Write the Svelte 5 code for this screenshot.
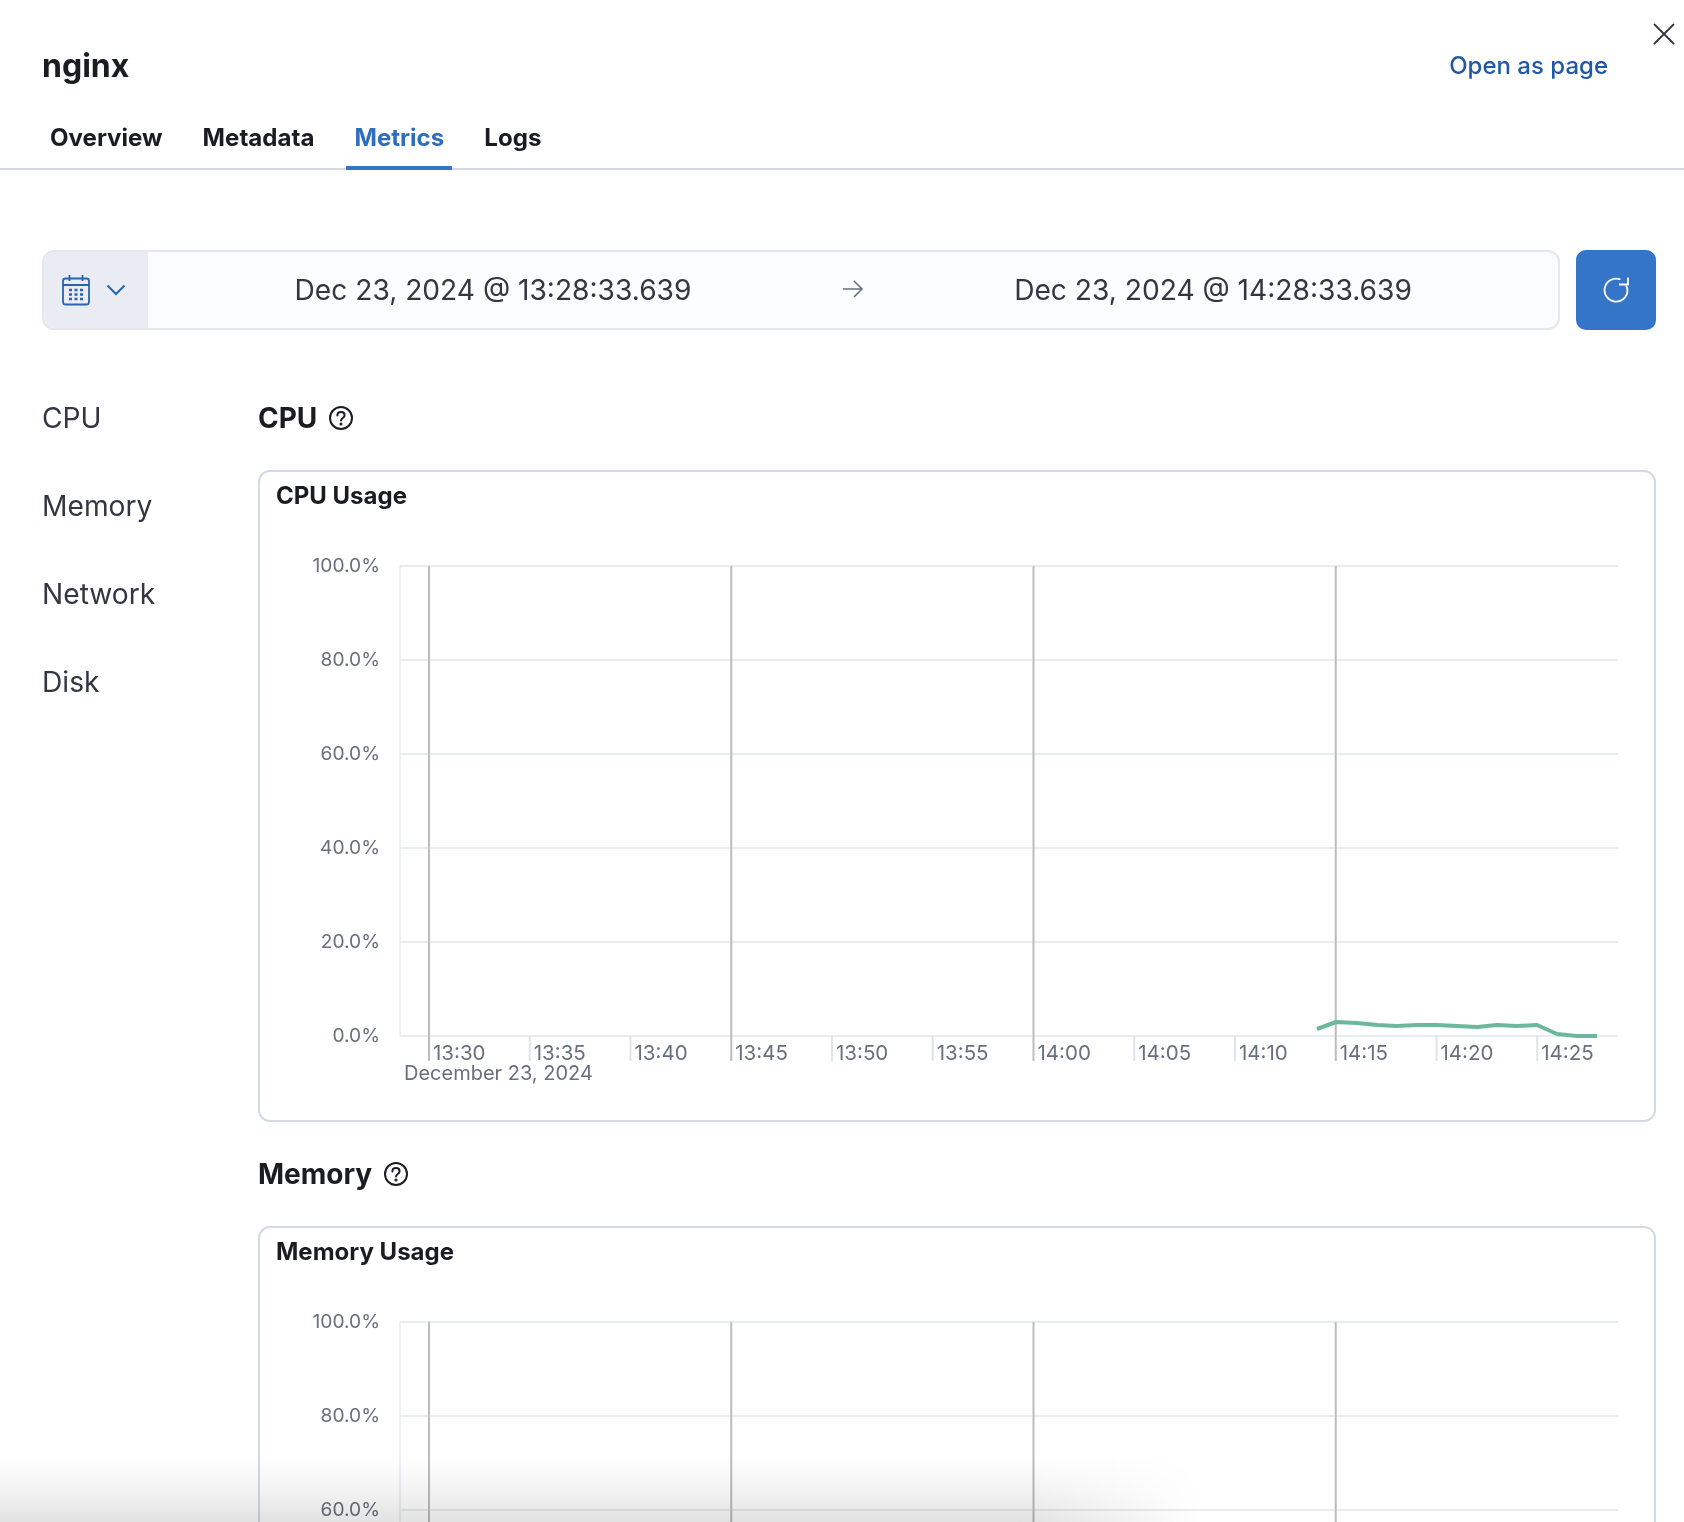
<script>
  const tabs = ["Overview", "Metadata", "Metrics", "Logs"];
  const nav = ["CPU", "Memory", "Network", "Disk"];

  // chart geometry, in svg coordinates (svg starts 260px in, 41px below panel top)
  const left = 140, right = 1358, top = 55, step = 94;
  const yLabels = ["100.0%", "80.0%", "60.0%", "40.0%", "20.0%", "0.0%"];
  const bottom = top + step * 5;
  const ticks = ["13:30", "13:35", "13:40", "13:45", "13:50", "13:55", "14:00", "14:05", "14:10", "14:15", "14:20", "14:25"];
  const tickX = (i) => 169 + i * 100.75;

  const cpuLine = "1057,518 1076,511 1097,512 1117,514 1137,515 1157,514 1177,514 1197,515 1217,516 1237,514 1257,515 1277,514 1297,523 1317,525 1337,525";
</script>

{#snippet helpIcon()}
  <svg class="help" width="24" height="24" viewBox="0 0 24 24" fill="none" stroke="#1a1c21" stroke-width="2">
    <circle cx="12" cy="12" r="11" />
    <path d="M8.400 9.400c0-2.100 1.600-3.400 3.600-3.400s3.600 1.300 3.600 3.200c0 2.900-3.600 2.700-3.600 5.400" stroke-linecap="round" />
    <circle cx="12" cy="18" r="0.6" fill="#1a1c21" />
  </svg>
{/snippet}

{#snippet chart(line)}
  <svg class="chart" width="1394" height="609" viewBox="0 0 1394 609">
    {#each yLabels as label, i}
      <line x1={left} x2={right} y1={top + i * step} y2={top + i * step} stroke="#e9ecf1" stroke-width="2" />
      <text x="120" y={top + i * step + 6} text-anchor="end" class="tick y">{label}</text>
    {/each}
    <line x1={left} x2={left} y1={top} y2={bottom} stroke="#e9ecf1" stroke-width="1.5" />
    {#each ticks as t, i}
      <line x1={tickX(i)} x2={tickX(i)} y1={bottom} y2={bottom + 25} stroke={i % 3 === 0 ? "#bdbdbd" : "#dfe2e7"} stroke-width="2" />
      {#if i % 3 === 0}
        <line x1={tickX(i)} x2={tickX(i)} y1={top} y2={bottom} stroke="#bdbdbd" stroke-width="2" />
      {/if}
      <text x={tickX(i) + 4} y={bottom + 24} class="tick">{t}</text>
    {/each}
    <text x="144" y={bottom + 44} class="tick date-label">December 23, 2024</text>
    {#if line}
      <polyline points={line} fill="none" stroke="#6db79c" stroke-width="4" stroke-linejoin="round" />
    {/if}
  </svg>
{/snippet}

<div class="flyout">
  <button class="close" aria-label="Close">
    <svg width="22" height="22" viewBox="0 0 22 22" fill="none" stroke="#343741" stroke-width="1.8"><path d="M1 1l20 20M21 1L1 21" /></svg>
  </button>

  <header>
    <div class="title-row">
      <h1>nginx</h1>
      <span class="link">Open as page</span>
    </div>
    <div class="tabs">
      {#each tabs as tab}
        <div class="tab" class:active={tab === "Metrics"}>{tab}</div>
      {/each}
    </div>
  </header>

  <div class="date-row">
    <div class="date-bar">
      <div class="prepend">
        <svg width="30" height="32" viewBox="0 0 30 32" fill="none" stroke="#2b64ad" stroke-width="1.8">
          <rect x="2" y="4.500" width="26" height="26" rx="2.500" />
          <path d="M2 11h26M8.500 1v6M21.500 1v6" />
          <path d="M8 16h3M13.500 16h3M19 16h3M8 20.500h3M13.500 20.500h3M19 20.500h3M8 25h3M13.500 25h3M19 25h3" stroke-width="2.400" />
        </svg>
        <svg width="20" height="12" viewBox="0 0 20 12" fill="none" stroke="#2b64ad" stroke-width="2"><path d="M1.500 1.500L10 10l8.500-8.500" /></svg>
      </div>
      <div class="dates">
        <span class="date">Dec 23, 2024 @ 13:28:33.639</span>
        <svg class="arrow" width="22" height="20" viewBox="0 0 22 20" fill="none" stroke="#69707d" stroke-width="1.600"><path d="M1 10h19M12 2l8 8-8 8" /></svg>
        <span class="date">Dec 23, 2024 @ 14:28:33.639</span>
      </div>
    </div>
    <button class="refresh" aria-label="Refresh">
      <svg width="28" height="28" viewBox="0 0 28 28" fill="none" stroke="#fff" stroke-width="1.800">
        <path d="M18.500 3.500A11.500 11.500 0 1 0 25.500 15c0-2-.5-3.800-1.500-5.400" />
        <path d="M26 1.500v7h-9" />
      </svg>
    </button>
  </div>

  <div class="body">
    <nav>
      {#each nav as item}
        <div class="nav-item">{item}</div>
      {/each}
    </nav>
    <main>
      <section>
        <h2>CPU {@render helpIcon()}</h2>
        <div class="panel">
          <h3>CPU Usage</h3>
          {@render chart(cpuLine)}
        </div>
      </section>
      <section>
        <h2>Memory {@render helpIcon()}</h2>
        <div class="panel">
          <h3>Memory Usage</h3>
          {@render chart(null)}
        </div>
      </section>
    </main>
  </div>

  <div class="fade"></div>
</div>

<style>
  :global(body) {
    background: #fff;
  }

  .flyout {
    position: relative;
    height: 1522px;
    overflow: hidden;
    font-family: Inter, "Liberation Sans", sans-serif;
    color: #343741;
    background: #fff;
  }

  .close {
    position: absolute;
    top: 23px;
    right: 9px;
    padding: 0;
    border: 0;
    background: none;
    line-height: 0;
  }

  header {
    height: 170px;
    box-sizing: border-box;
    padding: 46px 76px 0 42px;
    border-bottom: 2px solid #d3dae6;
  }

  .title-row {
    display: flex;
    justify-content: space-between;
    align-items: center;
    height: 40px;
  }

  h1 {
    margin: 0;
    font-size: 32px;
    line-height: 40px;
    font-weight: 700;
    color: #1a1c21;
  }

  .link {
    margin-top: -1px;
    font-size: 24px;
    font-weight: 500;
    color: #2159a5;
  }

  .tabs {
    display: flex;
    gap: 24px;
    margin-top: 19px;
  }

  .tab {
    height: 65px;
    line-height: 65px;
    padding: 0 8px;
    font-size: 24.100px;
    font-weight: 700;
    color: #1a1c21;
  }

  .tab.active {
    color: #2f6ebf;
    box-shadow: inset 0 -4px 0 #3575c8;
  }

  .date-row {
    display: flex;
    gap: 16px;
    margin-top: 80px;
    padding: 0 28px 0 42px;
  }

  .date-bar {
    flex: 1;
    display: flex;
    height: 80px;
    box-sizing: border-box;
    border: 2px solid #e4e7eb;
    border-radius: 12px;
    overflow: hidden;
    background: #fbfcfd;
  }

  .prepend {
    width: 104px;
    box-sizing: border-box;
    display: flex;
    align-items: center;
    gap: 15px;
    padding-left: 17px;
    background: #e9edf3;
  }

  .dates {
    flex: 1;
    display: flex;
    align-items: center;
  }

  .arrow {
    margin: -2px 4px 0;
  }

  .date {
    flex: 1;
    text-align: center;
    font-size: 28.150px;
    color: #343741;
  }

  .refresh {
    width: 80px;
    height: 80px;
    padding: 0;
    border: 0;
    border-radius: 10px;
    background: #3575c8;
    display: flex;
    align-items: center;
    justify-content: center;
  }

  .body {
    display: flex;
    margin-top: 44px;
    padding: 0 28px 0 42px;
  }

  nav {
    width: 216px;
    flex-shrink: 0;
  }

  .nav-item {
    height: 88px;
    line-height: 88px;
    font-size: 28.200px;
    color: #343741;
  }

  main {
    flex: 1;
    min-width: 0;
    padding-top: 24px;
    display: flex;
    flex-direction: column;
    gap: 32px;
  }

  h2 {
    display: flex;
    align-items: center;
    gap: 12px;
    margin: 0 0 32px;
    height: 40px;
    font-size: 28px;
    font-weight: 700;
    color: #1a1c21;
  }

  .panel {
    height: 652px;
    box-sizing: border-box;
    border: 2px solid #d3dae6;
    border-radius: 12px;
    flex-shrink: 0;
  }

  h3 {
    margin: 0;
    padding: 8px 16px 0;
    height: 39px;
    box-sizing: border-box;
    line-height: 32px;
    font-size: 24px;
    font-weight: 700;
    color: #1a1c21;
  }

  .chart {
    display: block;
  }

  .tick {
    font-family: Inter, "Liberation Sans", sans-serif;
    font-size: 20.500px;
    fill: #69707d;
  }

  .tick.y {
    font-size: 19.200px;
  }

  .tick.date-label {
    font-size: 20px;
  }

  .fade {
    position: absolute;
    left: 0;
    bottom: 0;
    width: 1200px;
    height: 66px;
    background: linear-gradient(to top, #e2e2e3, #f2f2f3 45%, #fff);
    -webkit-mask-image: linear-gradient(to right, #000 86%, transparent 100%);
    mask-image: linear-gradient(to right, #000 86%, transparent 100%);
    mix-blend-mode: multiply;
    pointer-events: none;
  }
</style>
